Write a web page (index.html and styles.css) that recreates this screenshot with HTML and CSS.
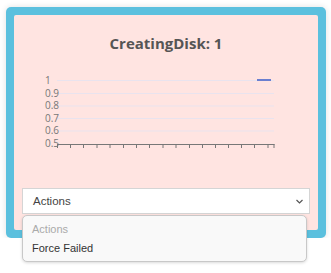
FILE: index.html
```html
<!DOCTYPE html>
<html>
    <head>
        <title>CreatingDisk</title>
        <link rel="stylesheet" href="styles.css">
    </head>
    <body>
        <!-- Kortet med blå ramme -->
        <div class="kort">
            <div class="innhold">
                <h2 class="tittel">CreatingDisk: 1</h2>

                <!-- Grafen tegnes som SVG -->
                <svg class="graf" width="304" height="100" viewBox="0 0 304 100">
                    <g class="rutenett">
                        <line x1="43" y1="20.5" x2="260" y2="20.5"/>
                        <line x1="43" y1="33.5" x2="260" y2="33.5"/>
                        <line x1="43" y1="46" x2="260" y2="46"/>
                        <line x1="43" y1="58.5" x2="260" y2="58.5"/>
                        <line x1="43" y1="71" x2="260" y2="71"/>
                    </g>
                    <g class="etiketter">
                        <text x="31" y="24">1</text>
                        <text x="31" y="36.5">0.9</text>
                        <text x="31" y="49">0.8</text>
                        <text x="31" y="61.5">0.7</text>
                        <text x="31" y="74">0.6</text>
                        <text x="31" y="87">0.5</text>
                    </g>
                    <g class="akse">
                        <line x1="43" y1="84.5" x2="260.5" y2="84.5"/>
                        <path d="M43.5 84v4 M56.5 84v4 M69.5 84v4 M83 84v4 M96 84v4 M109.5 84v4 M122.5 84v4 M135.5 84v4 M149 84v4 M162 84v4 M175.5 84v4 M188.5 84v4 M201.5 84v4 M214.5 84v4 M227.5 84v4 M240.5 84v4 M254 84v4 M260 84v4"/>
                    </g>
                    <line class="data" x1="243" y1="20" x2="257" y2="20"/>
                </svg>

                <!-- Nedtrekksmenyen -->
                <div class="velger">
                    <span>Actions</span>
                    <svg class="pil" width="7" height="5" viewBox="0 0 7 5"><path d="M0.5 1l3 3 3-3"/></svg>
                </div>
            </div>
        </div>

        <!-- Listen som er åpen over kortet -->
        <div class="liste">
            <div class="valg tom">Actions</div>
            <div class="valg">Force Failed</div>
        </div>
    </body>
</html>
```
FILE: styles.css
```css
/* Hele siden */
body {
    margin: 0;
    padding: 7px 0 0 6px;
    background-color: #fff;
    font-family: "Open Sans", sans-serif;
}

/* Den blå rammen rundt kortet */
.kort {
    width: 320px;
    box-sizing: border-box;
    padding: 8px;
    background-color: #5bc0de;
    border-radius: 5px;
    box-shadow: 0 0 6px rgba(0, 0, 0, 0.12);
}

/* Den rosa flaten inni */
.innhold {
    height: 215px;
    box-sizing: border-box;
    padding-top: 18px;
    background-color: #ffe4e1;
    border-radius: 2px;
}

.tittel {
    margin: 0;
    text-align: center;
    font-size: 15px;
    line-height: 20px;
    font-weight: 700;
    color: #555;
}

.graf {
    display: block;
    margin-top: 7px;
}

.rutenett line {
    stroke: #e9e3ee;
    stroke-width: 1;
}

.etiketter text {
    font-family: "Open Sans", sans-serif;
    font-size: 10px;
    fill: #777;
}

.akse line,
.akse path {
    stroke: #777;
    stroke-width: 1;
}

.data {
    stroke: #6a7fd0;
    stroke-width: 2;
}

.velger {
    margin: 28px 8px 0 8px;
    height: 26px;
    box-sizing: border-box;
    display: flex;
    align-items: center;
    justify-content: space-between;
    padding: 0 6px 0 10px;
    background-color: #fff;
    border: 1px solid #d5d5d5;
    font-family: "Liberation Sans", Arial, sans-serif;
    font-size: 11.5px;
    color: #444;
}

.pil path {
    fill: none;
    stroke: #555;
    stroke-width: 1.2;
}

/* Den åpne listen ligger over kortet */
.liste {
    position: absolute;
    left: 22px;
    top: 215px;
    width: 285px;
    height: 47px;
    box-sizing: border-box;
    padding-top: 4px;
    background-color: #f9f9f9;
    border: 1px solid #c8c8c8;
    border-radius: 5px;
    box-shadow: 0 1px 3px rgba(0, 0, 0, 0.15);
    font-family: "Liberation Sans", Arial, sans-serif;
    font-size: 11px;
    color: #333;
}

.valg {
    height: 19px;
    line-height: 19px;
    padding-left: 9px;
}

.tom {
    color: #aaa;
}
```
